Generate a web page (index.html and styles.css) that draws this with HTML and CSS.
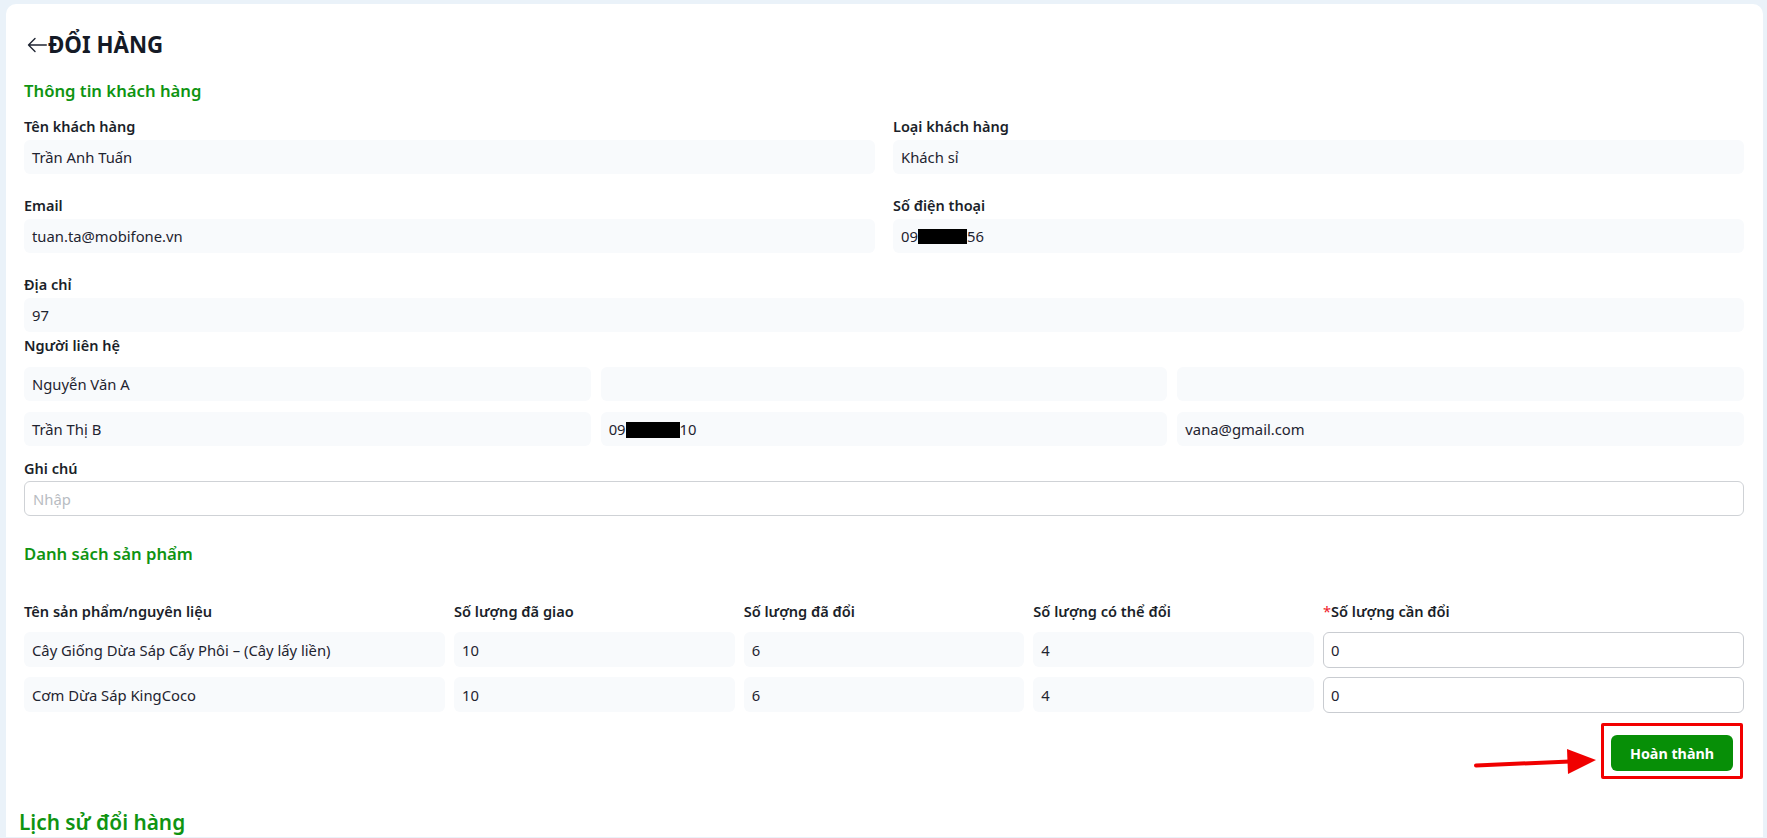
FILE: index.html
```html
<!DOCTYPE html>
<html lang="vi">
<head>
<meta charset="utf-8">
<title>Đổi hàng</title>
<link rel="stylesheet" href="styles.css">
</head>
<body>
<div class="page">
  <main class="card">
    <div class="title">
      <svg class="back" viewBox="0 0 20 16" width="20" height="16" aria-hidden="true"><path d="M19.3 8H1.5M8 1.5L1.5 8L8 14.5" fill="none" stroke="#1f2533" stroke-width="1.4" stroke-linecap="round" stroke-linejoin="round"/></svg>
      <h1>ĐỔI HÀNG</h1>
    </div>

    <h2 class="section">Thông tin khách hàng</h2>
    <div class="grid2">
      <div class="field">
        <div class="label">Tên khách hàng</div>
        <div class="box">Trần Anh Tuấn</div>
      </div>
      <div class="field">
        <div class="label">Loại khách hàng</div>
        <div class="box">Khách sỉ</div>
      </div>
      <div class="field">
        <div class="label">Email</div>
        <div class="box">tuan.ta@mobifone.vn</div>
      </div>
      <div class="field">
        <div class="label">Số điện thoại</div>
        <div class="box">09<span class="mask mask-a"></span>56</div>
      </div>
    </div>
    <div class="field full">
      <div class="label">Địa chỉ</div>
      <div class="box">97</div>
    </div>
    <div class="label contact-label">Người liên hệ</div>
    <div class="grid3">
      <div class="box">Nguyễn Văn A</div>
      <div class="box"></div>
      <div class="box"></div>
      <div class="box">Trần Thị B</div>
      <div class="box">09<span class="mask mask-b"></span>10</div>
      <div class="box">vana@gmail.com</div>
    </div>
    <div class="label note-label">Ghi chú</div>
    <div class="textarea"><span class="placeholder">Nhập</span></div>

    <h2 class="section products-title">Danh sách sản phẩm</h2>
    <div class="table">
      <div class="th">Tên sản phẩm/nguyên liệu</div>
      <div class="th">Số lượng đã giao</div>
      <div class="th">Số lượng đã đổi</div>
      <div class="th">Số lượng có thể đổi</div>
      <div class="th"><span class="req">*</span>Số lượng cần đổi</div>

      <div class="cell">Cây Giống Dừa Sáp Cấy Phôi – (Cây lấy liền)</div>
      <div class="cell">10</div>
      <div class="cell">6</div>
      <div class="cell">4</div>
      <div class="qty">0</div>

      <div class="cell">Cơm Dừa Sáp KingCoco</div>
      <div class="cell">10</div>
      <div class="cell">6</div>
      <div class="cell">4</div>
      <div class="qty">0</div>
    </div>

    <div class="actions">
      <div class="highlight">
        <button class="btn-primary">Hoàn thành</button>
      </div>
      <svg class="annot-arrow" viewBox="0 0 126 30" width="126" height="30" aria-hidden="true">
        <path d="M2 19.5L96 15.5" stroke="#f00000" stroke-width="4" stroke-linecap="round"/>
        <path d="M93 3L122 14L94 28Z" fill="#f00000"/>
      </svg>
    </div>

    <h2 class="history">Lịch sử đổi hàng</h2>
  </main>
</div>
</body>
</html>
```

FILE: styles.css
```css
* { box-sizing: border-box; }

html, body {
  margin: 0;
  padding: 0;
}

body {
  background: #eaf2f9;
  font-family: "Noto Sans", "Open Sans", "Liberation Sans", sans-serif;
  color: #1b1f2a;
  font-size: 14.8px;
  height: 838px;
  overflow: hidden;
}

.page {
  padding: 4px 4px 0 6px;
}

.card {
  background: #ffffff;
  border-radius: 10px 10px 0 0;
  padding: 26px 19px 0 18px;
  height: 833px;
}

.title {
  display: flex;
  align-items: center;
  height: 30px;
  margin-left: 3px;
}

.back {
  display: block;
  margin-right: 1px;
}

.title h1 {
  margin: 0;
  font-size: 22.3px;
  font-weight: 700;
  color: #151a26;
  line-height: 30px;
}

.section {
  margin: 19px 0 0;
  font-size: 16.7px;
  line-height: 24px;
  font-weight: 600;
  color: #0f9412;
}

.grid2 {
  display: grid;
  grid-template-columns: 1fr 1fr;
  column-gap: 18px;
  row-gap: 21px;
  margin-top: 13px;
}

.field {
  display: flex;
  flex-direction: column;
}

.field.full {
  margin-top: 21px;
}

.label {
  font-size: 14.5px;
  font-weight: 600;
  line-height: 20px;
  color: #1b1f2a;
  margin-bottom: 4px;
}

.box {
  height: 34px;
  background: #f8fafc;
  border-radius: 6px;
  padding: 0 8px;
  display: flex;
  align-items: center;
  font-size: 14.8px;
  color: #1f2430;
}

.mask {
  display: inline-block;
  background: #000;
  height: 15px;
}

.mask-a { width: 49px; margin-top: 1px; }
.mask-b { width: 54px; height: 16px; margin-top: 1px; }

.contact-label {
  margin-top: 3px;
  margin-bottom: 12px;
}

.grid3 {
  display: grid;
  grid-template-columns: 1fr 1fr 1fr;
  column-gap: 10px;
  row-gap: 11px;
}

.note-label {
  margin-top: 12px;
  margin-bottom: 3px;
}

.textarea {
  height: 35px;
  border: 1px solid #cfd2d6;
  border-radius: 6px;
  padding: 0 8px;
  display: flex;
  align-items: center;
}

.placeholder {
  color: #b8bcc2;
  font-size: 14.8px;
}

.products-title {
  margin-top: 26px;
}

.table {
  display: grid;
  grid-template-columns: 1.5fr 1fr 1fr 1fr 1.5fr;
  column-gap: 9px;
  row-gap: 9px;
  margin-top: 35px;
}

.th {
  font-size: 14.6px;
  font-weight: 600;
  line-height: 20px;
  margin-bottom: 2px;
  color: #1b1f2a;
}

.req {
  color: #f0202a;
  font-weight: 400;
}

.cell {
  height: 35px;
  background: #f8fafc;
  border-radius: 6px;
  padding: 0 8px;
  display: flex;
  align-items: center;
  font-size: 14.8px;
  color: #1f2430;
}

.qty {
  height: 36px;
  border: 1px solid #c9ccd1;
  border-radius: 6px;
  padding: 0 7px;
  display: flex;
  align-items: center;
  font-size: 14.8px;
  color: #1f2430;
  background: #fff;
}

.actions {
  position: relative;
  display: flex;
  justify-content: flex-end;
  margin-top: 10px;
  padding-right: 1px;
}

.highlight {
  border: 3px solid #f20000;
  border-radius: 2px;
  padding: 9px 7px 5px;
}

.btn-primary {
  display: block;
  width: 122px;
  height: 36px;
  border: none;
  border-radius: 6px;
  background: #078f07;
  color: #ffffff;
  font-family: inherit;
  font-size: 14.3px;
  font-weight: 700;
}

.annot-arrow {
  position: absolute;
  right: 144px;
  top: 23px;
}

.history {
  margin: 28px 0 0 -5px;
  font-size: 20.8px;
  line-height: 30px;
  font-weight: 600;
  color: #0f9412;
}
```
